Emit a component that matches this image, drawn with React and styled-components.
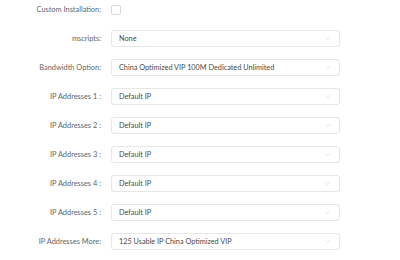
import React from 'react';
import styled, { createGlobalStyle } from 'styled-components';
import { ChevronDown } from 'lucide-react';

const GlobalStyle = createGlobalStyle`
  body {
    margin: 0;
    background: #fff;
    font-family: Lato, "Open Sans", "Liberation Sans", sans-serif;
  }
`;

const Form = styled.div`
  display: grid;
  grid-template-columns: 101px 229px;
  grid-auto-rows: 17px;
  column-gap: 10px;
  row-gap: 12px;
  padding-top: 1px;
`;

const Label = styled.div`
  display: flex;
  align-items: center;
  justify-content: flex-end;
  font-size: 7.4px;
  color: #666;
  white-space: nowrap;
`;

const Control = styled.div`
  display: flex;
  align-items: center;
`;

const Checkbox = styled.span`
  width: 8px;
  height: 8px;
  border: 1px solid #d9d9d9;
  border-radius: 2px;
  background: #fff;
`;

const Select = styled.div`
  flex: 1;
  height: 100%;
  box-sizing: border-box;
  display: flex;
  align-items: center;
  justify-content: space-between;
  padding: 0 7px 0 7px;
  border: 1px solid #e6e6e6;
  border-radius: 3px;
  font-size: 7.3px;
  color: #4a4a4a;
  white-space: nowrap;
`;

const Arrow = styled(ChevronDown)`
  color: #c8c8c8;
  flex-shrink: 0;
`;

const rows = [
  ['mscripts:', 'None'],
  ['Bandwidth Option:', 'China Optimized VIP 100M Dedicated Unlimited'],
  ['IP Addresses 1 :', 'Default IP'],
  ['IP Addresses 2 :', 'Default IP'],
  ['IP Addresses 3 :', 'Default IP'],
  ['IP Addresses 4 :', 'Default IP'],
  ['IP Addresses 5 :', 'Default IP'],
  ['IP Addresses More:', '125 Usable IP China Optimized VIP'],
];

export default function App() {
  return (
    <>
      <GlobalStyle />
      <Form>
        <Label>Custom Installation:</Label>
        <Control>
          <Checkbox />
        </Control>
        {rows.map(([label, value]) => (
          <React.Fragment key={label}>
            <Label>{label}</Label>
            <Control>
              <Select>
                <span>{value}</span>
                <Arrow size={9} strokeWidth={1.2} />
              </Select>
            </Control>
          </React.Fragment>
        ))}
      </Form>
    </>
  );
}
